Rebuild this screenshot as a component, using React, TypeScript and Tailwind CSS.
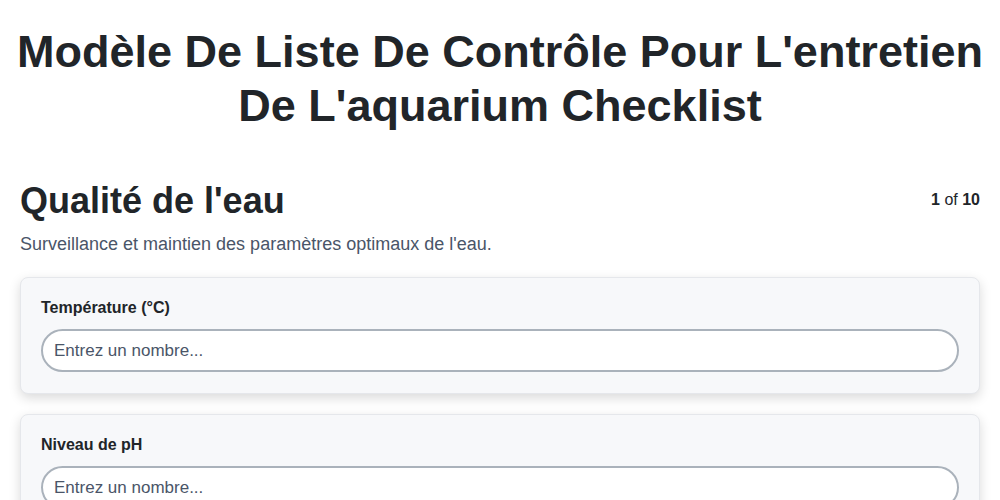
import React from 'react';

const fields = [
  { id: 'temperature', label: 'Température (°C)' },
  { id: 'ph', label: 'Niveau de pH' },
  { id: 'ammoniac', label: 'Ammoniac (ppm)' },
];

export default function App() {
  return (
    <div className="min-h-screen bg-white font-['Liberation_Sans',Arial,sans-serif] text-[#212529]">
      <h1 className="px-3 pt-[25px] text-center text-[45px] font-bold leading-[54px]">
        Modèle De Liste De Contrôle Pour L'entretien De L'aquarium Checklist
      </h1>

      <div className="px-5 pt-[46px]">
        {/* Section header with step counter */}
        <div className="flex items-start justify-between">
          <h2 className="text-[36px] font-bold leading-[1.2]">Qualité de l'eau</h2>
          <div className="pt-[9px] text-base">
            <span className="font-bold">1</span> of <span className="font-bold">10</span>
          </div>
        </div>
        <p className="mt-[9px] text-lg leading-[27px] text-[#4a5568]">
          Surveillance et maintien des paramètres optimaux de l'eau.
        </p>

        <div className="mt-[19px] flex flex-col gap-5">
          {fields.map((f) => (
            <div
              key={f.id}
              className="rounded-lg border border-[#e5e7eb] bg-[#f7f8fa] px-5 pb-[21px] pt-[18px] shadow-[0_4px_12px_rgba(0,0,0,0.15)]"
            >
              <label htmlFor={f.id} className="block text-base font-bold leading-6">
                {f.label}
              </label>
              <input
                id={f.id}
                type="text"
                placeholder="Entrez un nombre..."
                className="mt-[9px] block h-[43px] w-full rounded-full border-2 border-[#aab2bb] bg-white px-[11px] text-[17px] text-[#212529] placeholder:text-[#4a5568] outline-none"
              />
            </div>
          ))}
        </div>
      </div>
    </div>
  );
}
